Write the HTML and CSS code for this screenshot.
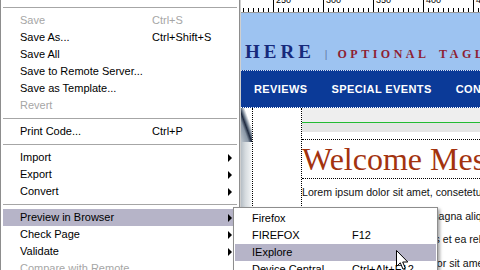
FILE: index.html
```html
<!DOCTYPE html>
<html lang="en">
<head>
    <meta charset="UTF-8">
    <meta name="viewport" content="width=device-width, initial-scale=1.0">
    <title>File menu - Preview in Browser</title>
    <link rel="stylesheet" href="styles.css">
</head>
<body>
<div class="screen">
    <div class="design">
        <div class="ruler">
            <div class="tick"><span>250</span></div>
            <div class="tick"><span>300</span></div>
            <div class="tick"><span>350</span></div>
            <div class="tick"><span>400</span></div>
            <div class="tick"><span>450</span></div>
        </div>
        <header class="masthead">
            <span class="logo">HERE</span>
            <span class="pipe">|</span>
            <span class="tagline">OPTIONAL TAGLINE</span>
        </header>
        <nav class="topnav">
            <a href="#">REVIEWS</a>
            <a href="#">SPECIAL EVENTS</a>
            <a href="#">CONTACT</a>
        </nav>
        <div class="content">
            <div class="gutter"></div>
            <div class="sidebar"></div>
            <div class="main">
                <div class="band"></div>
                <div class="band-low"></div>
                <h1 class="welcome">Welcome Message</h1>
                <p class="intro">Lorem ipsum dolor sit amet, consetetur sadipscing elitr, sed diam nonumy eirmod tempor<br>invidunt ut labore et dolore magna aliquyam erat, sed diam voluptua.<br>accusam et justo duo dolores et ea rebum. Stet clita kasd gubergren,<br>sanctus est Lorem ipsum dolor sit amet.</p>
            </div>
        </div>
    </div>

    <div class="menu file-menu">
        <div class="item off"><span>Close All</span><span>Ctrl+Shift+W</span></div>
        <div class="sep"></div>
        <div class="item off"><span>Save</span><span>Ctrl+S</span></div>
        <div class="item"><span>Save As...</span><span>Ctrl+Shift+S</span></div>
        <div class="item"><span>Save All</span></div>
        <div class="item"><span>Save to Remote Server...</span></div>
        <div class="item"><span>Save as Template...</span></div>
        <div class="item off"><span>Revert</span></div>
        <div class="sep"></div>
        <div class="item"><span>Print Code...</span><span>Ctrl+P</span></div>
        <div class="sep"></div>
        <div class="item"><span>Import</span><span></span><i class="more"></i></div>
        <div class="item"><span>Export</span><span></span><i class="more"></i></div>
        <div class="item"><span>Convert</span><span></span><i class="more"></i></div>
        <div class="sep"></div>
        <div class="item on"><span>Preview in Browser</span><span></span><i class="more"></i></div>
        <div class="item"><span>Check Page</span><span></span><i class="more"></i></div>
        <div class="item"><span>Validate</span><span></span><i class="more"></i></div>
        <div class="item off"><span>Compare with Remote</span></div>
    </div>

    <div class="menu sub-menu">
        <div class="item"><span>Firefox</span></div>
        <div class="item"><span>FIREFOX</span><span>F12</span></div>
        <div class="item on"><span>IExplore</span></div>
        <div class="item"><span>Device Central</span><span>Ctrl+Alt+F12</span></div>
    </div>

    <svg class="cursor" width="13" height="21" viewBox="0 0 13 21">
        <path d="M0.5 0.5 V16.5 L4.3 12.8 L7 19.2 L9.3 18.2 L6.7 12 H11.8 Z" fill="#fff" stroke="#000"/>
    </svg>
</div>
</body>
</html>
```

FILE: styles.css
```css
body {
    margin: 0;
    background-color: #fff;
    font-family: "Liberation Sans", Arial, sans-serif;
}
.screen {
    position: relative;
    width: 480px;
    height: 270px;
    overflow: hidden;
}

/* design view behind the menus */
.design {
    margin-left: 240px;
    width: 240px;
}
.ruler {
    display: flex;
    height: 12px;
    padding-left: 33px;
    border-bottom: 1px solid #9a9a9a;
    background: #fff linear-gradient(90deg, #000 1px, transparent 1px) 3px 100% / 5px 4px repeat-x;
    overflow: hidden;
}
.tick {
    flex: none;
    width: 50px;
    border-left: 1px solid #000;
    box-sizing: border-box;
    padding-left: 2px;
    font-size: 9px;
    line-height: 9px;
}
.tick span {
    display: block;
    margin-top: -4px;
}
.masthead {
    display: flex;
    align-items: baseline;
    height: 57px;
    padding: 29px 0 0 5px;
    box-sizing: border-box;
    background-color: #9dc3f1;
    white-space: nowrap;
}
.logo {
    font: bold 19px/19px "Liberation Serif", serif;
    letter-spacing: 4px;
    color: #172a7c;
}
.pipe {
    margin: 0 10px;
    font-size: 10px;
    color: #5d73a6;
}
.tagline {
    font: bold 12px "Liberation Serif", serif;
    letter-spacing: 3.5px;
    word-spacing: 4px;
    color: #8e1f33;
}
.topnav {
    display: flex;
    align-items: center;
    gap: 24px;
    height: 36px;
    padding-left: 14px;
    background-color: #0b3a98;
    border-top: 1px dotted #d4def0;
    border-bottom: 1px dotted #fff;
    white-space: nowrap;
}
.topnav a {
    color: #fff;
    font-size: 11px;
    font-weight: bold;
    letter-spacing: 0.4px;
    text-decoration: none;
}
.content {
    display: flex;
    height: 162px;
}
.gutter {
    flex: none;
    width: 12px;
    background:
        linear-gradient(70deg, #c3cad1 0%, #8a97a6 35%, #1f2a3f 48%, #6d7b8c 56%, #fff 70%) 0 0 / 100% 34px no-repeat,
        linear-gradient(90deg, #aeb7bf, #d6dbdf 45%, #eceff1 85%, #fff);
}
.sidebar {
    flex: none;
    width: 48px;
    border-left: 1px dotted #000;
    border-right: 1px dotted #000;
}
.main {
    flex: 1;
}
.band {
    height: 14px;
    background-color: #eeeeee;
    border-bottom: 1px solid #22bb33;
}
.band-low {
    height: 9px;
    margin-bottom: 7px;
    background-color: #e4e4e4;
}
.welcome {
    margin: 0;
    font: normal 32px/38px "Liberation Serif", serif;
    color: #a3330f;
    border-top: 1px dotted #000;
    border-bottom: 1px dotted #000;
    white-space: nowrap;
}
.intro {
    margin: 2px 0 0;
    font-size: 10.6px;
    line-height: 23.5px;
    color: #111;
    white-space: nowrap;
}

/* menus */
.menu {
    position: absolute;
    box-sizing: border-box;
    background-color: #fff;
    border: 1px solid #8d8d8d;
    font-size: 11px;
    color: #000;
}
.file-menu {
    left: 0;
    top: -17px;
    width: 240px;
    padding: 2px;
    box-shadow: 1px 0 0 #cfcfcf;
}
.sub-menu {
    left: 233px;
    top: 207px;
    width: 205px;
    padding: 2px 1px;
    box-shadow: 2px 2px 3px rgba(0, 0, 0, 0.35);
}
.item {
    display: grid;
    grid-template-columns: 132px 1fr 4px;
    align-items: center;
    height: 17px;
    line-height: 17px;
    padding: 0 5px 0 17px;
    white-space: nowrap;
}
.sub-menu .item {
    grid-template-columns: 100px 1fr;
}
.item.on {
    background-color: #b6b4c8;
}
.item.off {
    color: #a6a6a6;
}
.more {
    width: 0;
    height: 0;
    border-left: 4px solid #000;
    border-top: 4px solid transparent;
    border-bottom: 4px solid transparent;
}
.sep {
    height: 1px;
    margin: 4px 0;
    background-color: #a6a6a6;
}
.cursor {
    position: absolute;
    left: 396px;
    top: 250px;
}
```
